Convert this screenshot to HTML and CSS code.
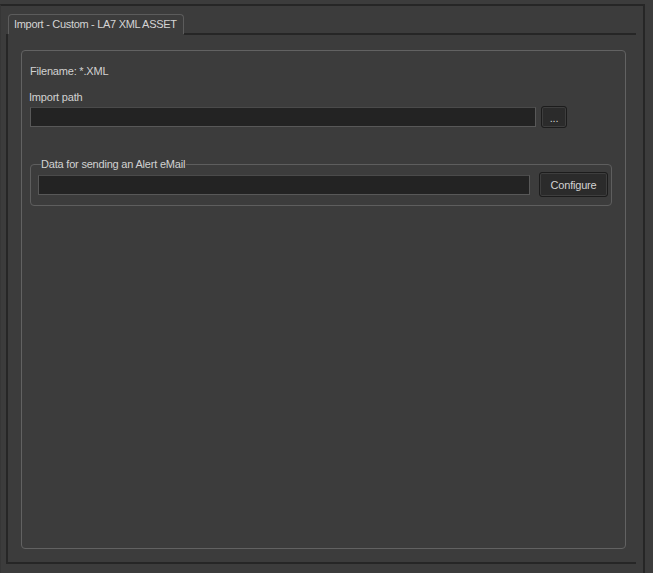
FILE: index.html
```html
<!DOCTYPE html>
<html>
<head>
<meta charset="utf-8">
<link rel="stylesheet" href="styles.css">
</head>
<body>
<div class="frame">
  <div class="tabbar">
    <div class="tab">Import - Custom - LA7 XML ASSET</div>
    <div class="tabline"></div>
  </div>
  <div class="pane">
    <div class="group">
      <div class="label filename">Filename: *.XML</div>
      <div class="label importlabel">Import path</div>
      <div class="row pathrow">
        <div class="input pathinput"></div>
        <button class="btn dots">...</button>
      </div>
      <fieldset class="alert">
        <legend>Data for sending an Alert eMail</legend>
        <div class="row alertrow">
          <div class="input mailinput"></div>
          <button class="btn configure">Configure</button>
        </div>
      </fieldset>
    </div>
  </div>
</div>
</body>
</html>
```
FILE: styles.css
```css
html, body {
  margin: 0;
  padding: 0;
  background: #3c3c3c;
  width: 653px;
  height: 573px;
  overflow: hidden;
  font-family: "Liberation Sans", Arial, sans-serif;
  font-size: 11px;
  color: #d2d2d2;
}

.frame {
  margin-top: 4px;
  width: 645px;
  height: 569px;
  border-top: 2px solid #262626;
  border-right: 2px solid #262626;
  border-left: 1px solid #363636;
  box-sizing: border-box;
}

.tabbar {
  display: flex;
  align-items: flex-end;
  height: 28px;
  padding-left: 7px;
}

.tab {
  height: 20px;
  box-sizing: border-box;
  padding: 3px 0 0 5px;
  border: 1px solid #5c5c5c;
  border-bottom: none;
  border-radius: 4px 4px 0 0;
  letter-spacing: -0.3px;
  white-space: nowrap;
  color: #d4d4d4;
  width: 176px;
}

.tabline {
  width: 452px;
  height: 2px;
  background: #262626;
  margin-bottom: -1px;
}

.pane {
  margin-left: 5px;
  width: 630px;
  height: 530px;
  box-sizing: border-box;
  border-left: 2px solid #262626;
  border-bottom: 2px solid #262626;
  padding: 16px 0 0 13px;
}

.group {
  width: 605px;
  height: 499px;
  box-sizing: border-box;
  border: 1px solid #626262;
  border-radius: 4px;
  padding: 14px 0 0 8px;
}

.label {
  line-height: 13px;
  letter-spacing: -0.2px;
}

.importlabel {
  margin-top: 13px;
  margin-left: -1px;
}

.row {
  display: flex;
  align-items: center;
}

.pathrow {
  margin-top: 2px;
  gap: 5px;
}

.input {
  height: 20px;
  box-sizing: border-box;
  background: #232323;
  border: 1px solid #585858;
  border-top-color: #4a4a4a;
}

.pathinput {
  width: 506px;
}

.btn {
  box-sizing: border-box;
  background: #2b2b2b;
  border: 1px solid #1c1c1c;
  border-radius: 3px;
  box-shadow: inset 0 0 0 1px #3e3e3e;
  color: #d2d2d2;
  font-family: "Liberation Sans", Arial, sans-serif;
  font-size: 11px;
  letter-spacing: -0.2px;
  padding: 0;
  margin: 0;
}

.dots {
  width: 26px;
  height: 22px;
  line-height: 18px;
  padding-top: 2px;
}

.alert {
  margin: 30px 0 0 0;
  width: 582px;
  height: 48px;
  box-sizing: border-box;
  border: 1px solid #5e5e5e;
  border-radius: 4px;
  padding: 1px 0 0 7px;
}

.alert legend {
  padding: 0 1px 0 0;
  margin-left: 3px;
  line-height: 13px;
  letter-spacing: -0.2px;
}

.alertrow {
  gap: 9px;
}

.mailinput {
  width: 492px;
}

.configure {
  width: 69px;
  height: 25px;
}
```
